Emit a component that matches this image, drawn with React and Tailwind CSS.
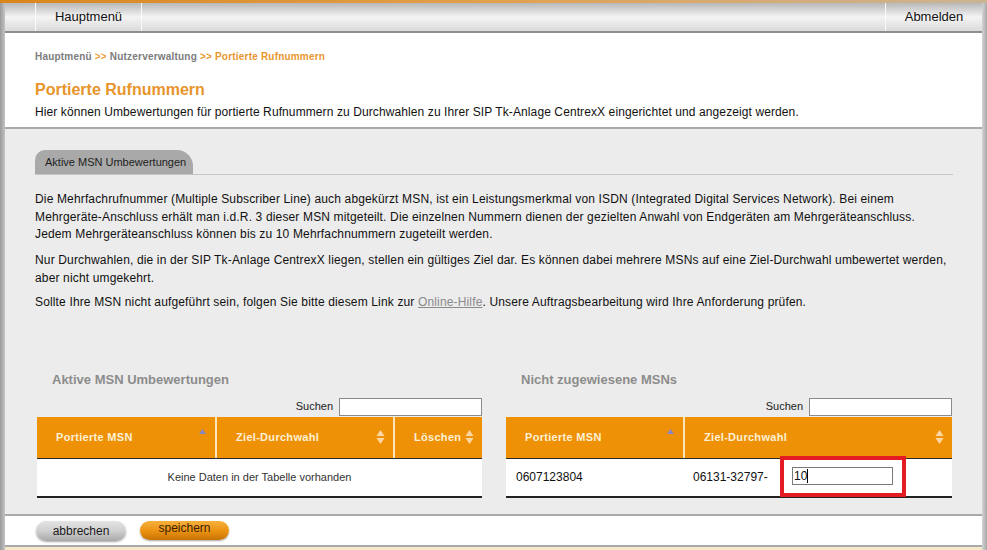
// App.jsx
// Portierte Rufnummern – MSN Umbewertung page
const font = { fontFamily: '"Liberation Sans", Arial, sans-serif' };

function SortIcon({ dir }) {
    if (dir === 'asc') {
        return (
            <svg width="9" height="14" viewBox="0 0 9 14" className="shrink-0">
                <path d="M4.5 1 L8 6 L1 6 Z" fill="#8a86c4" />
            </svg>
        );
    }
    return (
        <svg width="9" height="16" viewBox="0 0 9 16" className="shrink-0">
            <path d="M4.5 1 L8.5 7 L0.5 7 Z" fill="#fad8a4" />
            <path d="M4.5 15 L8.5 9 L0.5 9 Z" fill="#fad8a4" />
        </svg>
    );
}

function HeaderCell({ label, width, sort, first }) {
    return (
        <div
            className={`flex items-center justify-between pl-[19px] pr-[8px] ${first ? '' : 'border-l-2 border-[#fbe3bd]'}`}
            style={{ width }}
        >
            <span className="text-[11px] font-bold tracking-[0.3px] text-[#fdf0d4]">{label}</span>
            <div className={sort === 'asc' ? 'self-start mt-[11px]' : ''}>
                <SortIcon dir={sort} />
            </div>
        </div>
    );
}

function SearchRow() {
    return (
        <div className="flex items-center justify-end gap-[6px] mb-[1px]">
            <span className="text-[11px] text-[#222]">Suchen</span>
            <div className="w-[143px] h-[18px] bg-white border border-[#8a8a8a]" />
        </div>
    );
}

function ActiveTable() {
    return (
        <div className="w-[445px]">
            <h3 className="text-[13px] leading-[16px] font-bold text-[#8c8c8c] pl-[15px] mb-[10px]">
                Aktive MSN Umbewertungen
            </h3>
            <SearchRow />
            <div className="flex h-[42px] bg-[#ef9106] border-b border-[#2a2a2a]">
                <HeaderCell label="Portierte MSN" width={178} sort="asc" first />
                <HeaderCell label="Ziel-Durchwahl" width={178} sort="both" />
                <HeaderCell label="Löschen" width={89} sort="both" />
            </div>
            <div className="h-[39px] bg-white border-b-2 border-[#222] flex items-center justify-center">
                <span className="text-[11px] text-[#333]">Keine Daten in der Tabelle vorhanden</span>
            </div>
        </div>
    );
}

function FreeTable() {
    return (
        <div className="w-[446px]">
            <h3 className="text-[13px] leading-[16px] font-bold text-[#8c8c8c] pl-[15px] mb-[10px]">
                Nicht zugewiesene MSNs
            </h3>
            <SearchRow />
            <div className="flex h-[42px] bg-[#ef9106] border-b border-[#2a2a2a]">
                <HeaderCell label="Portierte MSN" width={177} sort="asc" first />
                <HeaderCell label="Ziel-Durchwahl" width={269} sort="both" />
            </div>
            <div className="h-[39px] bg-white border-b-2 border-[#222] flex items-center relative">
                <span className="w-[177px] pl-[10px] text-[12px] text-[#111]">0607123804</span>
                <span className="pl-[10px] text-[12px] text-[#111]">06131-32797-</span>
                {/* highlighted input */}
                <div className="absolute left-[274px] top-[-3px] w-[126px] h-[41px] border-[4px] border-[#e31b23] flex items-center pl-[8px]">
                    <div className="w-[101px] h-[18px] bg-white border border-[#7a7a7a] flex items-center pl-[1px]">
                        <span className="text-[12px] text-[#111] leading-none">10</span>
                        <span className="w-px h-[14px] bg-black" />
                    </div>
                </div>
            </div>
        </div>
    );
}

export default function App() {
    return (
        <div className="w-[987px] h-[550px] overflow-hidden bg-white flex flex-col" style={font}>
            {/* top accent */}
            <div className="h-[3px] bg-gradient-to-r from-[#d9861a] via-[#e2a04c] to-[#c9b494] shrink-0" />

            <div className="flex flex-1 min-h-0">
                <div className="w-[5px] bg-gradient-to-r from-[#9a9a9a] to-[#c4c4c4] shrink-0" />

                <div className="flex-1 flex flex-col min-w-0">
                    {/* nav bar */}
                    <div className="h-[30px] flex justify-between bg-gradient-to-b from-[#b8b8b8] via-[#f4f4f4] to-[#dadada] border-b-2 border-[#8e8e8e] shrink-0">
                        <div className="ml-[30px] w-[107px] flex items-center justify-center border-x border-[#fafafa] text-[13px] text-[#111]">
                            Hauptmenü
                        </div>
                        <div className="w-[97px] flex items-center justify-center border-l border-[#fafafa] text-[13px] text-[#111]">
                            Abmelden
                        </div>
                    </div>

                    {/* page header */}
                    <div className="pt-[17px] pb-[7px] pl-[30px] border-b-2 border-[#a9a9a9] shrink-0">
                        <div className="h-[14px] text-[10px] font-bold leading-[14px] tracking-[0.2px]">
                            <span className="text-[#7c7c7c]">Hauptmenü </span>
                            <span className="text-[#f0a040]">&gt;&gt; </span>
                            <span className="text-[#7c7c7c]">Nutzerverwaltung </span>
                            <span className="text-[#e8962e]">&gt;&gt; Portierte Rufnummern</span>
                        </div>
                        <h1 className="mt-[16px] text-[16px] leading-[20px] font-bold text-[#e8942c]">
                            Portierte Rufnummern
                        </h1>
                        <p className="mt-[4px] text-[12px] leading-[16px] tracking-[0.1px] text-[#111]">
                            Hier können Umbewertungen für portierte Rufnummern zu Durchwahlen zu Ihrer SIP Tk-Anlage CentrexX eingerichtet und angezeigt werden.
                        </p>
                    </div>

                    {/* content */}
                    <div className="bg-[#ececec] pt-[21px] pl-[30px] pr-[29px] h-[387px] border-b-2 border-[#a9a9a9] shrink-0">
                        <div className="border-b border-[#c6c6c6]">
                            <div className="w-[158px] h-[24px] bg-[#a9a9a9] rounded-tl-[10px] rounded-tr-[16px] flex items-center pl-[10px] text-[11px] text-[#1e1e1e]">
                                Aktive MSN Umbewertungen
                            </div>
                        </div>

                        <div className="mt-[16px] text-[12px] leading-[17.5px] tracking-[0.15px] text-[#111]">
                            <p className="mb-[8.5px]">
                                Die Mehrfachrufnummer (Multiple Subscriber Line) auch abgekürzt MSN, ist ein Leistungsmerkmal von ISDN (Integrated Digital Services Network). Bei einem Mehrgeräte-Anschluss erhält man i.d.R. 3 dieser MSN mitgeteilt. Die einzelnen Nummern dienen der gezielten Anwahl von Endgeräten am Mehrgeräteanschluss. Jedem Mehrgeräteanschluss können bis zu 10 Mehrfachnummern zugeteilt werden.
                            </p>
                            <p className="mb-[7px]">
                                Nur Durchwahlen, die in der SIP Tk-Anlage CentrexX liegen, stellen ein gültiges Ziel dar. Es können dabei mehrere MSNs auf eine Ziel-Durchwahl umbewertet werden, aber nicht umgekehrt.
                            </p>
                            <p>
                                Sollte Ihre MSN nicht aufgeführt sein, folgen Sie bitte diesem Link zur{' '}
                                <a className="text-[#8a8a8a] underline">Online-Hilfe</a>. Unsere Auftragsbearbeitung wird Ihre Anforderung prüfen.
                            </p>
                        </div>

                        <div className="mt-[60px] ml-[2px] flex gap-[24px]">
                            <ActiveTable />
                            <FreeTable />
                        </div>
                    </div>

                    {/* actions */}
                    <div className="flex-1 flex items-start gap-[14px] pl-[31px] pt-[5px] border-b-2 border-[#a9a9a9]">
                        <button className="w-[90px] h-[20px] rounded-full bg-gradient-to-b from-[#e4e4e4] via-[#cfcfcf] to-[#a9a9a9] shadow-[0_1px_2px_rgba(0,0,0,0.35)] text-[12px] text-[#1a1a1a] leading-[18px]">
                            abbrechen
                        </button>
                        <button className="w-[89px] h-[19px] rounded-full bg-gradient-to-b from-[#f6b13a] via-[#ec9412] to-[#c87406] shadow-[0_1px_2px_rgba(0,0,0,0.35)] text-[12px] text-[#3b1e00] leading-[14px] pb-[5px]">
                            speichern
                        </button>
                    </div>
                    <div className="h-[3px] bg-[#f6e7c9] shrink-0" />
                </div>

                <div className="w-[5px] bg-gradient-to-r from-[#d4d4d4] to-[#a8a8a8] shrink-0" />
            </div>
        </div>
    );
}
